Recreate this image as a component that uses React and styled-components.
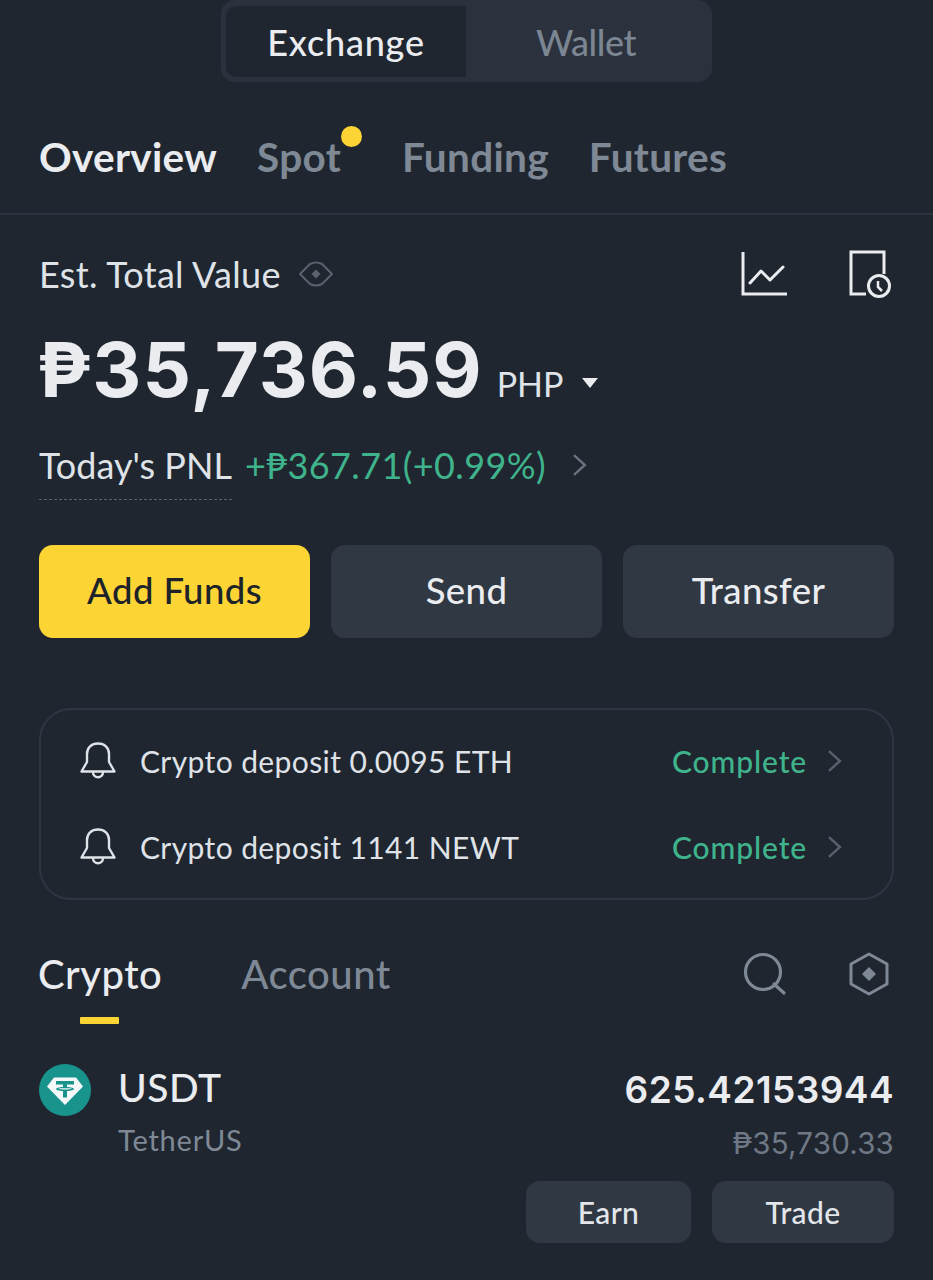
import React from "react";
import styled, { createGlobalStyle } from "styled-components";

const Global = createGlobalStyle`
  html, body { margin: 0; padding: 0; background: #1f2630; }
  * { box-sizing: border-box; }
`;
const Page = styled.div`
  width: 933px; height: 1280px; overflow: hidden; background: #1f2630; color: #eaecef;
  font-family: "Lato", "Inter", "DejaVu Sans", sans-serif;
`;
const SegWrap = styled.div`display: flex; justify-content: center;`;
const Segment = styled.div`
  width: 491px; height: 82px; padding: 6px 5px 5px; display: flex;
  background: #2b323e; border-radius: 14px;
`;
const SegItem = styled.div`
  width: 240px; display: flex; align-items: center; justify-content: center;
  font-size: 36px; font-weight: 500;
  letter-spacing: ${p => (p.$active ? "0.8px" : "-0.4px")};
  color: ${p => (p.$active ? "#eaecef" : "#7c8592")};
  background: ${p => (p.$active ? "#1f2630" : "transparent")};
  border-radius: 10px 0 0 10px;
`;
const Tabs = styled.nav`
  display: flex; gap: 40px; height: 133px; padding: 35px 0 0 39px; align-items: flex-start;
  border-bottom: 2px solid #2d3440;
`;
const Tab = styled.div`
  position: relative; font-size: 40.5px; font-weight: 700; line-height: 80px; height: 80px; letter-spacing: 0.3px;
  padding-right: ${p => (p.$dot ? "21px" : "0")};
  color: ${p => (p.$active ? "#eaecef" : "#7f8996")};
`;
const Dot = styled.span`
  position: absolute; right: 0; top: 9px; width: 21px; height: 21px; border-radius: 50%; background: #fcd535;
`;
const Main = styled.main`padding: 0 39px;`;
const ValueHead = styled.div`display: flex; align-items: center; justify-content: space-between; height: 61px; margin-top: 28px;`;
const ValueLabel = styled.div`display: flex; align-items: center; gap: 17px; font-size: 36px; color: #dfe3e8; letter-spacing: 0.3px;`;
const HeadIcons = styled.div`display: flex; gap: 60px; align-items: center; padding-right: 3px;`;
const Amount = styled.div`display: flex; align-items: baseline; height: 92px; margin-top: 19px;`;
const Big = styled.span`font-family: "Inter", sans-serif; font-size: 76px; font-weight: 700; line-height: 92px; color: #eaecef; letter-spacing: 1px; margin-left: -2px;`;
const Php = styled.span`font-size: 34px; margin-left: 14px; color: #dfe3e8;`;
const Caret = styled.span`
  width: 0; height: 0; border-left: 8px solid transparent; border-right: 8px solid transparent; border-top: 10px solid #eaecef;
  margin-left: 19px; align-self: center; margin-top: 28px;
`;
const Pnl = styled.div`display: flex; align-items: center; height: 60px; margin-top: 20px; font-size: 36px;`;
const PnlLabel = styled.span`color: #dfe3e8; border-bottom: 1px dashed #59616d; padding: 8px 0 14px; line-height: 40px; margin-bottom: -7px;`;
const PnlValue = styled.span`color: #3fb48c; margin-left: 13px; letter-spacing: 0.4px; margin-right: 26px;`;
const Actions = styled.div`display: grid; grid-template-columns: repeat(3, 271px); gap: 21px; margin-top: 50px;`;
const ActionBtn = styled.div`
  height: 93px; border-radius: 14px; display: flex; align-items: center; justify-content: center; padding-bottom: 3px;
  font-size: 36.5px; font-weight: 500; letter-spacing: 0.4px;
  background: ${p => (p.$primary ? "#fcd535" : "#2f3843")};
  color: ${p => (p.$primary ? "#1e2329" : "#eaecef")};
`;
const Notices = styled.section`
  margin-top: 70px; height: 192px; border: 2px solid #2f3642; border-radius: 32px; padding: 8px 50px 0 39px;
  display: flex; flex-direction: column;
`;
const Notice = styled.div`display: flex; align-items: center; height: 86px; font-size: 30px; letter-spacing: 0.4px;`;
const NoticeText = styled.span`margin-left: 24px; flex: 1; color: #dfe3e8;`;
const Complete = styled.span`color: #3fb48c; font-weight: 500; margin-right: 20px; letter-spacing: 0.9px;`;
const ListHead = styled.div`display: flex; align-items: flex-start; justify-content: space-between; margin-top: 40px; height: 94px;`;
const ListTabs = styled.div`display: flex; gap: 79px; margin-left: -1px;`;
const ListTab = styled.div`
  position: relative; font-size: 40px; font-weight: 500; line-height: 68px; letter-spacing: 0.5px;
  color: ${p => (p.$active ? "#eaecef" : "#7f8996")};
  ${p => p.$active && `&::after { content: ""; position: absolute; left: 42px; bottom: -16px; width: 39px; height: 7px; border-radius: 1px; background: #fcd535; }`}
`;
const ListIcons = styled.div`display: flex; gap: 62px; align-items: center; height: 68px; padding-right: 5px;`;
const Asset = styled.div`display: flex; justify-content: space-between; margin-top: 30px;`;
const AssetLeft = styled.div`display: flex; gap: 27px; align-items: flex-start;`;
const AssetNames = styled.div`display: flex; flex-direction: column;`;
const Symbol = styled.div`font-size: 39px; font-weight: 500; line-height: 50px; margin-top: -2px; letter-spacing: 0.5px;`;
const FullName = styled.div`font-size: 29px; line-height: 40px; margin-top: 8px; color: #7f8996; letter-spacing: 0.8px;`;
const AssetRight = styled.div`display: flex; flex-direction: column; align-items: flex-end;`;
const Qty = styled.div`font-family: "Inter", sans-serif; font-size: 37px; font-weight: 600; line-height: 50px; margin-top: 1px; letter-spacing: 0.45px;`;
const Fiat = styled.div`font-family: "Inter", sans-serif; font-size: 29.5px; line-height: 40px; margin-top: 8px; color: #6f7885; letter-spacing: 0.2px;`;
const AssetBtns = styled.div`display: flex; gap: 21px; margin-top: 18px;`;
const SmallBtn = styled.div`
  width: ${p => p.$w}px; height: 62px; border-radius: 14px; background: #2f3843; display: flex; align-items: center; justify-content: center;
  font-size: 30px; font-weight: 500; color: #e3e6ea; letter-spacing: 0.4px;
`;

const Eye = () => (
  <svg width="36" height="28" viewBox="0 0 36 28" fill="none" stroke="#5a626e" strokeWidth="2">
    <path d="M2 14 L12 4 Q18 1 24 4 L34 14 L24 24 Q18 27 12 24 Z" strokeLinejoin="round" />
    <path d="M18 9.5 L22.5 14 L18 18.5 L13.5 14 Z" fill="#5a626e" stroke="none" />
  </svg>
);
const Chart = () => (
  <svg width="48" height="48" viewBox="0 0 48 48" fill="none" stroke="#eaecef" strokeWidth="3">
    <path d="M2 2 V44 H46" />
    <path d="M9 33 L20 21 L29 30 L42 17" strokeLinecap="round" strokeLinejoin="round" />
  </svg>
);
const History = () => (
  <svg width="42" height="48" viewBox="0 0 42 48" fill="none" stroke="#eaecef" strokeWidth="3">
    <path d="M17 44 H2 V2 H35 V24" />
    <circle cx="30" cy="36" r="10.5" />
    <path d="M29 31 V37 L33 41" strokeWidth="2.5" />
  </svg>
);
const Bell = () => (
  <svg width="36" height="38" viewBox="0 0 36 38" fill="none" stroke="#dfe3e8" strokeWidth="2.4" strokeLinejoin="round">
    <path d="M1.5 29.5 L7 20 V12 C7 5.5 11.5 1.5 18 1.5 C24.5 1.5 29 5.5 29 12 V20 L34.5 29.5 Z" />
    <path d="M13 30 C13 37 23 37 23 30" />
  </svg>
);
const Chevron = ({ color = "#59616d", size = 24 }) => (
  <svg width={size * 0.62} height={size} viewBox="0 0 15 24" fill="none" stroke={color} strokeWidth="2.4">
    <path d="M2 2 L13 12 L2 22" />
  </svg>
);
const Search = () => (
  <svg width="44" height="44" viewBox="0 0 44 44" fill="none" stroke="#7f8996" strokeWidth="3.2" strokeLinecap="round">
    <circle cx="20" cy="20" r="17.5" />
    <path d="M31 32 L41 41" />
  </svg>
);
const Hexagon = () => (
  <svg width="40" height="44" viewBox="0 0 40 44" fill="none" stroke="#7f8996" strokeWidth="3">
    <path d="M20 2 L38 12 V32 L20 42 L2 32 V12 Z" strokeLinejoin="round" />
    <path d="M20 15 L27 22 L20 29 L13 22 Z" fill="#7f8996" stroke="none" />
  </svg>
);
const Tether = () => (
  <svg width="52" height="52" viewBox="0 0 52 52">
    <circle cx="26" cy="26" r="26" fill="#18948d" />
    <path d="M15 13.5 H37 L44 22.5 L26 41 L8 22.5 Z" fill="#f5f8f8" />
    <path d="M17 17 H35 V20.5 H28 V23 C32 23.2 35 24 35 25 C35 26 32 26.8 28 27 V33.5 H24 V27 C20 26.8 17 26 17 25 C17 24 20 23.2 24 23 V20.5 H17 Z" fill="#18948d" />
    <path d="M19 24.8 C21 25.8 31 25.8 33 24.8 C31 24.2 21 24.2 19 24.8 Z" fill="#f5f8f8" />
  </svg>
);

export default function App() {
  return (
    <Page>
      <Global />
      <SegWrap>
        <Segment>
          <SegItem $active>Exchange</SegItem>
          <SegItem>Wallet</SegItem>
        </Segment>
      </SegWrap>
      <Tabs>
        <Tab $active>Overview</Tab>
        <Tab $dot>Spot<Dot /></Tab>
        <Tab>Funding</Tab>
        <Tab>Futures</Tab>
      </Tabs>
      <Main>
        <ValueHead>
          <ValueLabel>Est. Total Value <Eye /></ValueLabel>
          <HeadIcons><Chart /><History /></HeadIcons>
        </ValueHead>
        <Amount>
          <Big>₱35,736.59</Big>
          <Php>PHP</Php>
          <Caret />
        </Amount>
        <Pnl>
          <PnlLabel>Today's PNL</PnlLabel>
          <PnlValue>+₱367.71(+0.99%)</PnlValue>
          <Chevron color="#6a727e" />
        </Pnl>
        <Actions>
          <ActionBtn $primary>Add Funds</ActionBtn>
          <ActionBtn>Send</ActionBtn>
          <ActionBtn>Transfer</ActionBtn>
        </Actions>
        <Notices>
          <Notice><Bell /><NoticeText>Crypto deposit 0.0095 ETH</NoticeText><Complete>Complete</Complete><Chevron /></Notice>
          <Notice><Bell /><NoticeText>Crypto deposit 1141 NEWT</NoticeText><Complete>Complete</Complete><Chevron /></Notice>
        </Notices>
        <ListHead>
          <ListTabs>
            <ListTab $active>Crypto</ListTab>
            <ListTab>Account</ListTab>
          </ListTabs>
          <ListIcons><Search /><Hexagon /></ListIcons>
        </ListHead>
        <Asset>
          <AssetLeft>
            <Tether />
            <AssetNames>
              <Symbol>USDT</Symbol>
              <FullName>TetherUS</FullName>
            </AssetNames>
          </AssetLeft>
          <AssetRight>
            <Qty>625.42153944</Qty>
            <Fiat>₱35,730.33</Fiat>
            <AssetBtns>
              <SmallBtn $w={165}>Earn</SmallBtn>
              <SmallBtn $w={182}>Trade</SmallBtn>
            </AssetBtns>
          </AssetRight>
        </Asset>
      </Main>
    </Page>
  );
}
